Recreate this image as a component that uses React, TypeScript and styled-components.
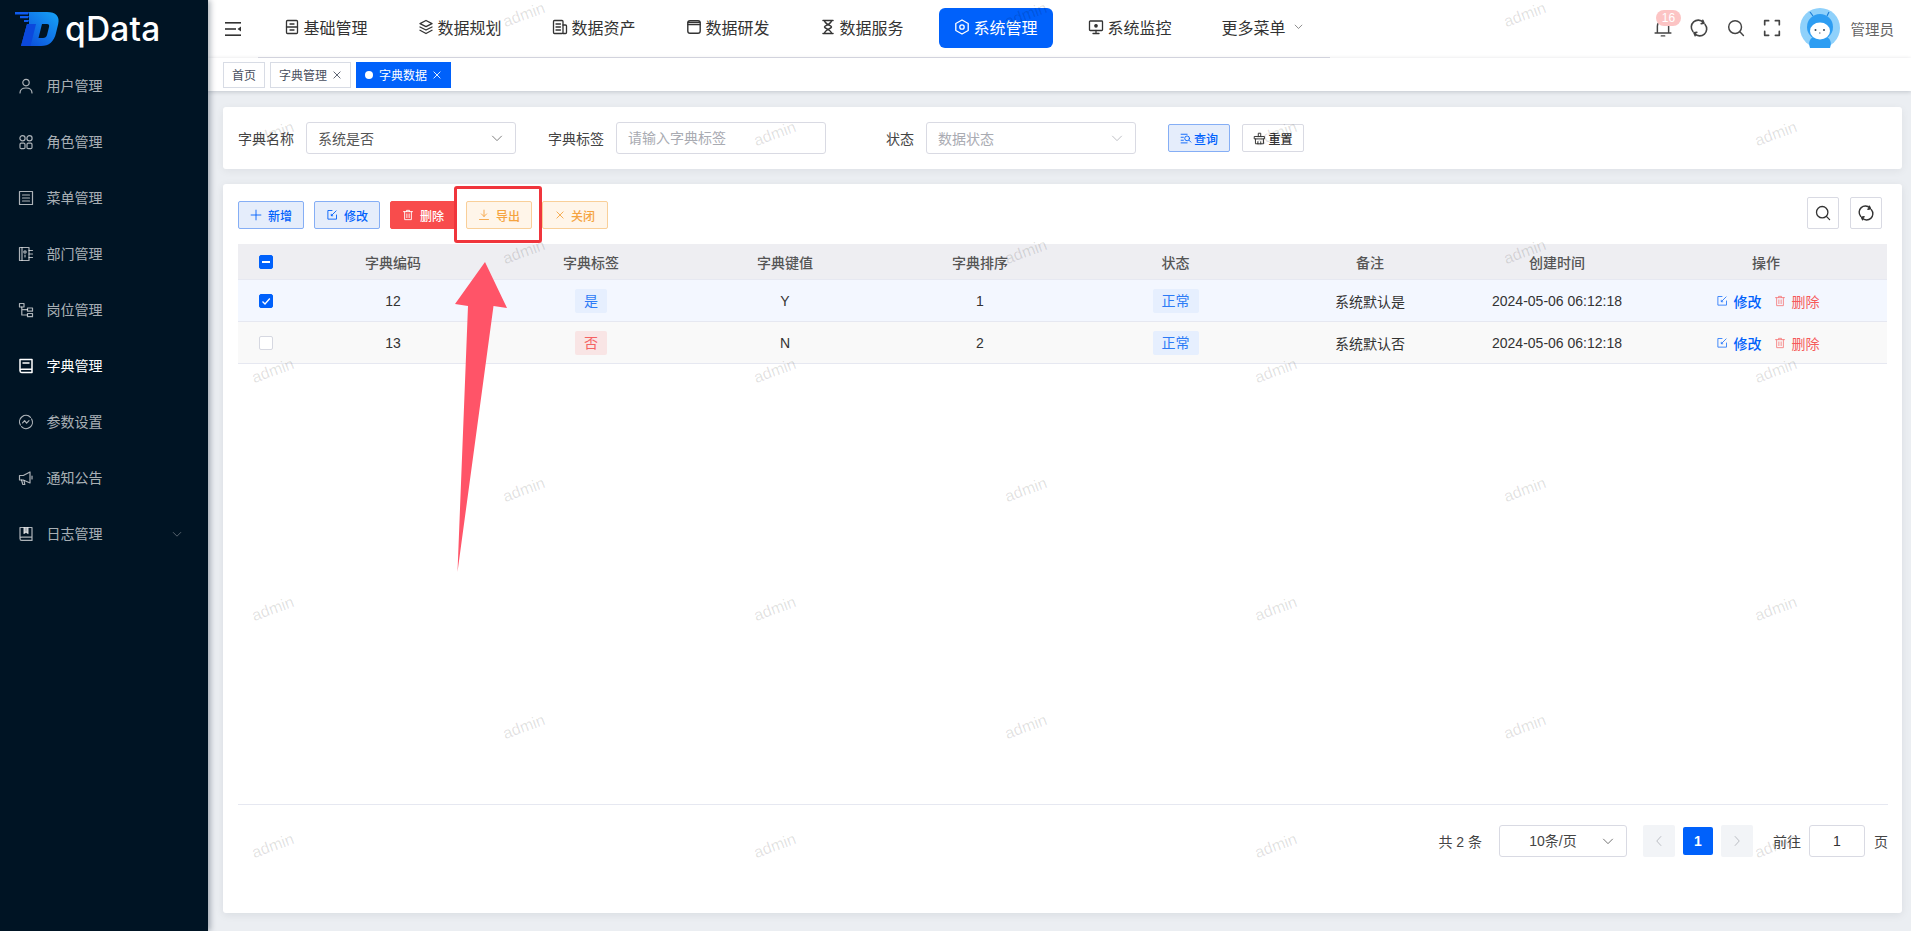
import { ReactNode } from 'react'
import styled, { createGlobalStyle } from 'styled-components'

const BLUE = '#0061fb'

const GlobalStyle = createGlobalStyle`
  html, body {
    margin: 0;
    height: 100%;
    overflow: hidden;
    background: #ebeef2;
    font-family: "Liberation Sans", "Noto Sans CJK SC", sans-serif;
    font-size: 14px;
    color: #333;
  }
  * { box-sizing: border-box; }
`

const Page = styled.div`
  position: relative;
  display: flex;
  width: 1911px;
  height: 931px;
  overflow: hidden;
`

/* ---------- sidebar ---------- */
const Sidebar = styled.aside`
  position: relative;
  z-index: 5;
  flex: 0 0 208px;
  background: #001424;
  box-shadow: 2px 0 6px rgba(0, 21, 41, 0.35);
`
const LogoRow = styled.div`
  display: flex;
  align-items: center;
  gap: 5px;
  height: 58px;
  padding: 0 0 0 14px;
`
const LogoText = styled.span`
  font-family: Inter, sans-serif;
  font-size: 33.5px;
  font-weight: 500;
  letter-spacing: 0.2px;
  line-height: 58px;
  color: #fff;
`
const SideItem = styled.div<{ $active?: boolean }>`
  display: flex;
  align-items: center;
  height: 56px;
  padding: 0 0 0 18px;
  color: ${p => (p.$active ? '#fff' : 'rgba(255, 255, 255, 0.68)')};
  svg { flex: none; }
`
const SideLabel = styled.span`
  margin-left: 12.5px;
  line-height: 20px;
`
const SideChevron = styled.span`
  display: flex;
  margin-left: 69px;
  opacity: 0.8;
`

/* ---------- top ---------- */
const Main = styled.div`
  flex: 1;
  display: flex;
  flex-direction: column;
  min-width: 0;
`
const TopBar = styled.header`
  display: flex;
  align-items: flex-start;
  height: 58px;
  background: #fff;
`
const Burger = styled.div`
  flex: 0 0 50px;
  height: 57px;
  display: flex;
  align-items: center;
  padding-left: 17px;
`
const Nav = styled.nav`
  display: flex;
  gap: 20px;
  width: 1072px;
  height: 58px;
  padding: 8px 0 0 10.5px;
  border-bottom: 1px solid #dcdde6;
`
const NavItem = styled.div<{ $active?: boolean }>`
  display: flex;
  align-items: center;
  gap: 4px;
  width: 114px;
  height: 40px;
  padding: 0 0 3px 15px;
  border-radius: 6px;
  font-size: 16px;
  background: ${p => (p.$active ? BLUE : 'transparent')};
  color: ${p => (p.$active ? '#fff' : '#333')};
  svg { flex: none; }
`
const MoreChevron = styled.span`
  display: flex;
  margin-left: 4px;
`
const TopRight = styled.div`
  display: flex;
  align-items: center;
  height: 56px;
  margin-left: auto;
  padding-right: 17px;
  color: #444;
`
const TopIcon = styled.span`
  position: relative;
  display: flex;
  justify-content: center;
  width: 18px;
  margin-right: 18.5px;
`
const Badge = styled.span`
  position: absolute;
  left: 2.5px;
  top: -8px;
  width: 25px;
  height: 16px;
  border-radius: 8px;
  background: #fcc4c4;
  color: #fff;
  font-size: 12px;
  line-height: 16px;
  text-align: center;
`
const UserName = styled.span`
  margin-left: 11px;
  color: #666;
  font-size: 14.5px;
`
const TagsBar = styled.div`
  position: relative;
  display: flex;
  align-items: center;
  gap: 5px;
  height: 33px;
  padding: 0 0 0 15px;
  background: #fff;
  box-shadow: 0 1px 4px rgba(0, 21, 41, 0.18);
`
const PageTag = styled.div<{ $active?: boolean }>`
  display: flex;
  align-items: center;
  height: 26px;
  padding: 0 8px;
  border: 1px solid ${p => (p.$active ? BLUE : '#d8dce5')};
  background: ${p => (p.$active ? BLUE : '#fff')};
  color: ${p => (p.$active ? '#fff' : '#495060')};
  font-size: 12px;
  white-space: nowrap;
  &::before {
    content: ${p => (p.$active ? "''" : 'none')};
    width: 8px;
    height: 8px;
    margin-right: 6px;
    border-radius: 50%;
    background: #fff;
  }
`
const TagClose = styled.span`
  display: flex;
  margin: 1px 0 0 5px;
`

/* ---------- content ---------- */
const Content = styled.main`
  flex: 1;
  display: flex;
  flex-direction: column;
  gap: 15px;
  padding: 16px 9px 18px 15px;
`
const SearchCard = styled.section`
  display: flex;
  align-items: center;
  flex: 0 0 62px;
  padding: 0 15px;
  border-radius: 3px;
  background: #fff;
  box-shadow: 0 2px 8px rgba(0, 21, 41, 0.06);
`
const FieldLabel = styled.label`
  flex: 0 0 56px;
  margin-right: 12px;
  text-align: right;
  color: #444;
`
const Field = styled.div`
  display: flex;
  align-items: center;
  margin-right: 32px;
`
const SelectBox = styled.div<{ $placeholder?: boolean }>`
  display: flex;
  align-items: center;
  justify-content: space-between;
  width: 210px;
  height: 32px;
  padding: 0 12px 0 11px;
  border: 1px solid #d9dae3;
  border-radius: 3px;
  background: #fff;
  color: ${p => (p.$placeholder ? '#a9abb2' : '#555')};
`
const TextInput = styled.input`
  width: 210px;
  height: 32px;
  padding: 0 11px;
  border: 1px solid #d9dae3;
  border-radius: 3px;
  outline: none;
  font: inherit;
  color: #555;
  &::placeholder { color: #a9abb2; opacity: 1; }
`
const SearchBtn = styled.button<{ $primary?: boolean }>`
  display: flex;
  align-items: center;
  justify-content: center;
  gap: 2px;
  width: 62px;
  height: 28px;
  margin-right: 12px;
  padding: 0;
  border: 1px solid ${p => (p.$primary ? '#85aef5' : '#d9dae3')};
  border-radius: 2px;
  background: ${p => (p.$primary ? '#e5edfb' : '#fff')};
  color: ${p => (p.$primary ? BLUE : '#333')};
  font: inherit;
  font-size: 12px;
  font-weight: 500;
`

const TableCard = styled.section`
  flex: 1;
  display: flex;
  flex-direction: column;
  padding: 13px 15px 0;
  border-radius: 3px;
  background: #fff;
  box-shadow: 0 2px 8px rgba(0, 21, 41, 0.08);
`
const Toolbar = styled.div`
  display: flex;
  align-items: flex-end;
  justify-content: space-between;
  height: 32px;
  margin-bottom: 15px;
  padding-right: 5px;
`
const ToolGroup = styled.div<{ $gap: number }>`
  display: flex;
  gap: ${p => p.$gap}px;
`
const variants = {
  primary: { bg: '#e5edfb', border: '#85aef5', color: BLUE },
  danger: { bg: '#f84c4c', border: '#f84c4c', color: '#fff' },
  warning: { bg: '#fff5e9', border: '#f9cf99', color: '#f5a33f' },
}
const ToolBtn = styled.button<{ $kind: keyof typeof variants }>`
  display: flex;
  align-items: center;
  justify-content: center;
  gap: 6px;
  width: 66px;
  height: 28px;
  padding: 0;
  border: 1px solid ${p => variants[p.$kind].border};
  border-radius: 2px;
  background: ${p => variants[p.$kind].bg};
  color: ${p => variants[p.$kind].color};
  font: inherit;
  font-size: 12px;
  font-weight: 500;
`
const SquareBtn = styled.button`
  display: flex;
  align-items: center;
  justify-content: center;
  width: 32px;
  height: 32px;
  padding: 0;
  border: 1px solid #d9dae3;
  border-radius: 2px;
  background: #fff;
  color: #333;
`
const TableRow = styled.div<{ $bg: string; $h: number; $head?: boolean }>`
  display: grid;
  grid-template-columns: 56px 198px 198px 190px 200px 191px 198px 176px 242px;
  align-items: center;
  justify-items: center;
  height: ${p => p.$h}px;
  background: ${p => p.$bg};
  border-bottom: 1px solid #e6e8f1;
  color: ${p => (p.$head ? '#555' : '#333')};
  font-weight: ${p => (p.$head ? 500 : 400)};
`
const CheckBox = styled.span<{ $on?: boolean }>`
  display: flex;
  align-items: center;
  justify-content: center;
  width: 14px;
  height: 14px;
  border: 1px solid ${p => (p.$on ? BLUE : '#d6d8e1')};
  border-radius: 2px;
  background: ${p => (p.$on ? BLUE : '#fff')};
`
const DictTag = styled.span<{ $red?: boolean }>`
  height: 24px;
  padding: 0 9px;
  border-radius: 2px;
  line-height: 24px;
  background: ${p => (p.$red ? '#f9e5e5' : '#e6effe')};
  color: ${p => (p.$red ? '#f56262' : '#2d7bf6')};
`
const Actions = styled.div`
  display: flex;
  align-items: center;
  margin-left: 3px;
`
const ActionLink = styled.span<{ $red?: boolean }>`
  display: flex;
  align-items: center;
  gap: 6px;
  margin-right: 12px;
  font-weight: ${p => (p.$red ? 400 : 500)};
  color: ${p => (p.$red ? '#f65a5a' : BLUE)};
  svg { opacity: ${p => (p.$red ? 0.75 : 0.8)}; }
  &:last-child { margin-right: 0; }
`
const Spacer = styled.div`
  flex: 1;
`
const Pager = styled.footer`
  display: flex;
  align-items: center;
  justify-content: flex-end;
  flex: 0 0 109px;
  margin-right: -1px;
  padding-bottom: 36px;
  border-top: 1px solid #e6e8f1;
  color: #444;
`
const PagerSelect = styled.div`
  position: relative;
  width: 128px;
  height: 32px;
  margin: 0 16px 0 17px;
  padding-right: 20px;
  border: 1px solid #d9dae3;
  border-radius: 3px;
  line-height: 30px;
  text-align: center;
  svg { position: absolute; right: 12px; top: 9px; }
`
const PageArrow = styled.div`
  display: flex;
  align-items: center;
  justify-content: center;
  width: 32px;
  height: 32px;
  border-radius: 2px;
  background: #f2f4f7;
  color: #a8abb2;
`
const PageNum = styled.div`
  width: 30px;
  height: 28px;
  margin: 0 8px;
  border-radius: 2px;
  background: ${BLUE};
  color: #fff;
  font-weight: 700;
  line-height: 28px;
  text-align: center;
`
const JumpInput = styled.input`
  width: 56px;
  height: 32px;
  margin: 0 9px 0 8px;
  border: 1px solid #d9dae3;
  border-radius: 3px;
  outline: none;
  font: inherit;
  color: #333;
  text-align: center;
`
const JumpLabel = styled.span`
  margin-left: 20px;
`

/* ---------- things lying over the page ---------- */
const WatermarkLayer = styled.div`
  position: absolute;
  inset: 0;
  z-index: 3;
  pointer-events: none;
`
const Watermark = styled.span`
  position: absolute;
  transform: translate(-50%, -50%) rotate(-20deg);
  font-size: 16px;
  color: rgba(0, 0, 0, 0.13);
`
const RedBox = styled.div`
  position: absolute;
  z-index: 4;
  left: 454px;
  top: 186px;
  width: 88px;
  height: 57px;
  border: 3px solid #f0353c;
  border-radius: 3px;
`
const ArrowSvg = styled.svg`
  position: absolute;
  z-index: 4;
  left: 440px;
  top: 250px;
`

/* ---------- icons ---------- */
function Ico({ size = 16, sw = 1.2, children }: { size?: number; sw?: number; children: ReactNode }) {
  return (
    <svg width={size} height={size} viewBox="0 0 16 16" fill="none" stroke="currentColor" strokeWidth={sw} strokeLinecap="round" strokeLinejoin="round">
      {children}
    </svg>
  )
}
const Chevron = ({ size = 12 }: { size?: number }) => (
  <Ico size={size} sw={1}><path d="M2 5.5 8 11.5 14 5.5" /></Ico>
)
const CloseX = ({ size = 10 }: { size?: number }) => (
  <Ico size={size} sw={1.4}><path d="M3 3 13 13M13 3 3 13" /></Ico>
)
const Refresh = ({ size = 20 }: { size?: number }) => (
  <Ico size={size} sw={1.4}>
    <path d="M2.600 11.200A6.200 6.200 0 0 1 11.800 2.900" />
    <path d="M13.400 4.800A6.200 6.200 0 0 1 4.200 13.100" />
    <path d="M11.400 1.200 12.500 3.800 9.900 4.200M4.600 14.800 3.500 12.200 6.100 11.800" fill="currentColor" />
  </Ico>
)
const SearchGlass = ({ size = 20 }: { size?: number }) => (
  <Ico size={size} sw={1.3}><circle cx="7.200" cy="7.200" r="5.700" /><path d="M11.400 11.400 14.600 14.600" /></Ico>
)
const EditIcon = ({ size = 12 }: { size?: number }) => (
  <Ico size={size} sw={1.2}>
    <path d="M8 2H2.500v11.500H14V8" /><path d="M7 9 13.500 2.500" /><path d="M7 7v2h2" />
  </Ico>
)
const TrashIcon = ({ size = 12 }: { size?: number }) => (
  <Ico size={size} sw={1.2}>
    <path d="M2 3.500h12M6 3.500V1.800h4v1.700M3.500 3.500v10.700h9V3.500M6.500 6.500v5M9.500 6.500v5" />
  </Ico>
)

const sideMenus: { label: string; active?: boolean; more?: boolean; icon: ReactNode }[] = [
  { label: '用户管理', icon: <Ico><circle cx="8" cy="4.600" r="3.200" /><path d="M2 15c0-3.400 2.600-5 6-5s6 1.600 6 5" /></Ico> },
  { label: '角色管理', icon: <Ico><circle cx="4.500" cy="4.200" r="2.600" /><circle cx="11.500" cy="4.200" r="2.600" /><rect x="2" y="9.200" width="5" height="5.400" rx="1.200" /><rect x="9" y="9.200" width="5" height="5.400" rx="1.200" /></Ico> },
  { label: '菜单管理', icon: <Ico><rect x="1.500" y="1.500" width="13" height="13" /><path d="M4.500 5h7M4.500 8h7M4.500 11h7" /></Ico> },
  { label: '部门管理', icon: <Ico><rect x="1.500" y="1.500" width="9.500" height="13" /><circle cx="7" cy="6" r="1.200" /><path d="M7 9v2M11 4.500h3.500M11 8h3.500M11 11.500h3.500M4 1.500v13" /></Ico> },
  { label: '岗位管理', icon: <Ico><rect x="1.500" y="1.500" width="4.500" height="3.500" /><rect x="9.500" y="6" width="5" height="3.200" /><rect x="9.500" y="11.500" width="5" height="3.200" /><path d="M3.800 5v8h5.700M3.800 7.600h5.700" /></Ico> },
  { label: '字典管理', active: true, icon: <Ico sw={1.5}><path d="M14 11.200H3.600A1.600 1.600 0 0 0 2 12.800v0a1.600 1.600 0 0 0 1.600 1.600H14V1.500H2v11.300" /><path d="M5 5h6" /></Ico> },
  { label: '参数设置', icon: <Ico><path d="M2.400 11A6.400 6.400 0 0 1 12.500 3.300M13.600 5A6.400 6.400 0 0 1 3.500 12.700" /><path d="M4.600 8.800 6.600 6.600 8.600 9.200 11 6.600" /></Ico> },
  { label: '通知公告', icon: <Ico><path d="M1.500 5.500h3.800L12 2v11L5.300 10H1.500z" /><path d="M3.500 10 4.800 14.500h2L6 10.500M14 6v3" /></Ico> },
  { label: '日志管理', more: true, icon: <Ico><path d="M14 11.200H3.600A1.600 1.600 0 0 0 2 12.800a1.600 1.600 0 0 0 1.600 1.600H14V1.500H2v11.300" /><path d="M6 1.500v6l2-1.400 2 1.400v-6" fill="currentColor" /></Ico> },
]

const navMenus: { label: string; active?: boolean; icon: ReactNode }[] = [
  { label: '基础管理', icon: <Ico sw={1.3}><rect x="2.500" y="1.500" width="11" height="13" rx="1" /><path d="M2.500 8h11M6 5h4M6 11h4" /></Ico> },
  { label: '数据规划', icon: <Ico sw={1.3}><path d="M8 1.500 14 4.600 8 7.700 2 4.600z" /><path d="M2 8 8 11 14 8M2 11.200 8 14.500 14 11.200" /></Ico> },
  { label: '数据资产', icon: <Ico sw={1.3}><rect x="1.500" y="1.500" width="9.500" height="13" rx="1" /><path d="M4 5h4.500M4 8h4.500M4 11h4.500M11 6h2.500a1 1 0 0 1 1 1v6.500a1 1 0 0 1-1 1H11" /></Ico> },
  { label: '数据研发', icon: <Ico sw={1.4}><rect x="1.800" y="1.800" width="12.400" height="12.400" rx="2.200" /><path d="M2 5.500h12M2 3.400h12" /></Ico> },
  { label: '数据服务', icon: <Ico sw={1.5}><path d="M3 1.500h10M3 14.500h10M4.500 1.500c0 3.600 7 5 7 6.500s-7 2.900-7 6.500M11.500 1.500c0 3.600-7 5-7 6.500s7 2.900 7 6.500" /></Ico> },
  { label: '系统管理', active: true, icon: <Ico sw={1.3}><path d="M8 1 14.200 4.500v7L8 15 1.800 11.500v-7z" /><circle cx="8" cy="8" r="2.200" /></Ico> },
  { label: '系统监控', icon: <Ico sw={1.3}><rect x="1.500" y="2" width="13" height="9.500" rx="0.800" /><path d="M8 11.500V14.500M5 14.500h6" /><circle cx="8" cy="6.800" r="1.200" fill="currentColor" /></Ico> },
]

const rows = [
  { code: '12', tag: '是', red: false, value: 'Y', sort: '1', note: '系统默认是', bg: '#f3f7ff', on: true },
  { code: '13', tag: '否', red: true, value: 'N', sort: '2', note: '系统默认否', bg: '#f9f9f9', on: false },
]

const markRows = Array.from({ length: 8 }, (_, i) => i)

function App() {
  return (
    <Page>
      <GlobalStyle />
      <Sidebar>
        <LogoRow>
          <svg width="46" height="36" viewBox="14 12 46 36">
            <defs>
              <linearGradient id="logoBlue" x1="0" y1="1" x2="1" y2="0">
                <stop offset="0" stopColor="#0a45d8" />
                <stop offset="1" stopColor="#16a4f7" />
              </linearGradient>
            </defs>
            <path fill="#0f5cf0" d="M15 13h14l-1 2.400H15zM20 17h9l-1 2.200H20zM24 21h5l-.8 2H24z" />
            <path fill="url(#logoBlue)" d="M29 13h18c9 0 13 4.500 11.200 12l-2.200 9c-1.800 8.500-7 13-15 13H21l6-22h2z" />
            <path fill="#0b48dc" d="M27 25h9l-5.500 22H21z" />
            <path fill="#001424" d="M42 25h5c1.800 0 2.500 1 2 3l-2 8c-.5 2-2 3-4 3h-4.500z" />
          </svg>
          <LogoText>qData</LogoText>
        </LogoRow>
        {sideMenus.map(m => (
          <SideItem key={m.label} $active={m.active}>
            {m.icon}
            <SideLabel>{m.label}</SideLabel>
            {m.more && <SideChevron><Chevron size={10} /></SideChevron>}
          </SideItem>
        ))}
      </Sidebar>

      <Main>
        <TopBar>
          <Burger>
            <svg width="16" height="14" viewBox="0 0 16 14" fill="#333">
              <rect width="16" height="1.600" />
              <rect y="6.200" width="11" height="1.600" />
              <rect y="12.400" width="16" height="1.600" />
              <path d="M12.500 7 16 4.600v4.800z" />
            </svg>
          </Burger>
          <Nav>
            {navMenus.map(m => (
              <NavItem key={m.label} $active={m.active}>
                {m.icon}
                <span>{m.label}</span>
              </NavItem>
            ))}
            <NavItem>
              <span>更多菜单</span>
              <MoreChevron><Chevron size={9} /></MoreChevron>
            </NavItem>
          </Nav>
          <TopRight>
            <TopIcon>
              <Badge>16</Badge>
              <Ico size={20} sw={1.3}><path d="M1 12.500h14M3 12.500V6.500a5 5 0 0 1 10 0v6M6.500 15h3" /></Ico>
            </TopIcon>
            <TopIcon><Refresh /></TopIcon>
            <TopIcon><SearchGlass /></TopIcon>
            <TopIcon>
              <Ico size={20} sw={1.5}><path d="M1.500 5V1.500H5M11 1.500h3.500V5M1.500 11v3.500H5M11 14.500h3.500V11" /></Ico>
            </TopIcon>
            <svg width="40" height="40" viewBox="0 0 40 40">
              <circle cx="20" cy="20" r="20" fill="#8fd1fb" />
              <path d="M10 40c-2-6 0-10 4-11h12c4 1 6 5 4 11z" fill="#2d9df2" />
              <path d="M13 8 10 4M27 8 29 4" stroke="#1c7fd8" strokeWidth="1.200" />
              <circle cx="20" cy="19" r="13" fill="#2d9df2" />
              <ellipse cx="20" cy="23" rx="10" ry="8.500" fill="#fff" />
              <circle cx="15.500" cy="22" r="1" fill="#345" />
              <circle cx="24" cy="22" r="1" fill="#345" />
              <path d="M19 25h1.500" stroke="#345" strokeWidth="0.800" />
            </svg>
            <UserName>管理员</UserName>
          </TopRight>
        </TopBar>

        <TagsBar>
          <PageTag>首页</PageTag>
          <PageTag>字典管理<TagClose><CloseX /></TagClose></PageTag>
          <PageTag $active>字典数据<TagClose><CloseX /></TagClose></PageTag>
        </TagsBar>

        <Content>
          <SearchCard>
            <Field>
              <FieldLabel>字典名称</FieldLabel>
              <SelectBox>系统是否<Chevron /></SelectBox>
            </Field>
            <Field>
              <FieldLabel>字典标签</FieldLabel>
              <TextInput placeholder="请输入字典标签" />
            </Field>
            <Field>
              <FieldLabel>状态</FieldLabel>
              <SelectBox $placeholder>数据状态<Chevron /></SelectBox>
            </Field>
            <SearchBtn $primary>
              <Ico size={12} sw={1.2}><path d="M1.500 3h8M1.500 7h3M1.500 11h3M1.500 14.500h8" /><circle cx="9.500" cy="8.500" r="3.200" /><path d="M12 11 14.500 13.500" /></Ico>
              查询
            </SearchBtn>
            <SearchBtn>
              <Ico size={13} sw={1.2}><path d="M6.500 5V1.500h3V5M2 5.500h12v3H2zM3 8.500v6h10v-6M6 14.500v-2.500M9.500 14.500v-2.500" /></Ico>
              重置
            </SearchBtn>
          </SearchCard>

          <TableCard>
            <Toolbar>
              <ToolGroup $gap={10}>
                <ToolBtn $kind="primary">
                  <Ico size={12} sw={1.2}><path d="M8 1.500v13M1.500 8h13" /></Ico>新增
                </ToolBtn>
                <ToolBtn $kind="primary"><EditIcon />修改</ToolBtn>
                <ToolBtn $kind="danger"><TrashIcon />删除</ToolBtn>
                <ToolBtn $kind="warning">
                  <Ico size={12} sw={1.2}><path d="M8 1.500v8.500M4.500 6.500 8 10l3.500-3.500M2 14h12" /></Ico>导出
                </ToolBtn>
                <ToolBtn $kind="warning"><CloseX />关闭</ToolBtn>
              </ToolGroup>
              <ToolGroup $gap={11}>
                <SquareBtn><SearchGlass size={16} /></SquareBtn>
                <SquareBtn><Refresh size={16} /></SquareBtn>
              </ToolGroup>
            </Toolbar>

            <TableRow $bg="#eeeef2" $h={36} $head>
              <CheckBox $on>
                <svg width="8" height="2" viewBox="0 0 8 2"><rect width="8" height="2" fill="#fff" /></svg>
              </CheckBox>
              <span>字典编码</span>
              <span>字典标签</span>
              <span>字典键值</span>
              <span>字典排序</span>
              <span>状态</span>
              <span>备注</span>
              <span>创建时间</span>
              <span>操作</span>
            </TableRow>
            {rows.map(r => (
              <TableRow key={r.code} $bg={r.bg} $h={42}>
                <CheckBox $on={r.on}>
                  {r.on && <svg width="10" height="10" viewBox="0 0 10 10" fill="none" stroke="#fff" strokeWidth="1.300"><path d="M1.500 5.500 4 8 8.800 2.500" /></svg>}
                </CheckBox>
                <span>{r.code}</span>
                <DictTag $red={r.red}>{r.tag}</DictTag>
                <span>{r.value}</span>
                <span>{r.sort}</span>
                <DictTag>正常</DictTag>
                <span>{r.note}</span>
                <span>2024-05-06 06:12:18</span>
                <Actions>
                  <ActionLink><EditIcon />修改</ActionLink>
                  <ActionLink $red><TrashIcon />删除</ActionLink>
                </Actions>
              </TableRow>
            ))}
            <Spacer />
            <Pager>
              <span>共 2 条</span>
              <PagerSelect>10条/页<Chevron /></PagerSelect>
              <PageArrow><Ico size={12} sw={1}><path d="M10.500 2 5 8l5.500 6" /></Ico></PageArrow>
              <PageNum>1</PageNum>
              <PageArrow><Ico size={12} sw={1}><path d="M5.500 2 11 8l-5.500 6" /></Ico></PageArrow>
              <JumpLabel>前往</JumpLabel>
              <JumpInput defaultValue="1" />
              <span>页</span>
            </Pager>
          </TableCard>
        </Content>
      </Main>

      <WatermarkLayer>
        {markRows.map(i =>
          (i % 2 === 0 ? [524, 1026, 1525] : [273, 775, 1276, 1776]).map(x => (
            <Watermark key={`${i}-${x}`} style={{ left: x, top: 15 + i * 118.7 }}>admin</Watermark>
          ))
        )}
      </WatermarkLayer>
      <RedBox />
      <ArrowSvg width="80" height="330" viewBox="440 250 80 330">
        <path fill="#ff5468" d="M485 262 507 308 493.500 306 457.500 572 468 306 455 304z" />
      </ArrowSvg>
    </Page>
  )
}

export default App
